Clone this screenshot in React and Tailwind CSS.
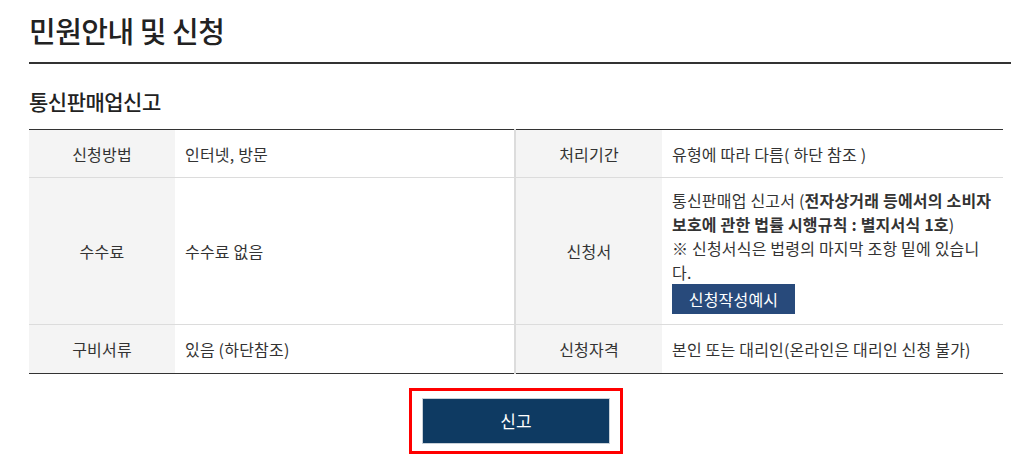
const FONT = { fontFamily: '"Noto Sans CJK KR", "Noto Sans", sans-serif' };

function Th({ children, first }) {
  return (
    <th
      className={
        'bg-[#f4f4f4] text-center align-middle text-[16px] font-normal tracking-[0.2px] text-[#333] ' +
        (first ? '' : 'border-l-2 border-[#dcdcdc]')
      }
    >
      {children}
    </th>
  );
}

function Td({ children }) {
  return (
    <td className="px-[10px] py-[10px] align-middle text-[16px] leading-[24px] tracking-[0.2px] text-[#333]">
      {children}
    </td>
  );
}

export default function App() {
  return (
    <div className="min-h-[465px] bg-white pl-[29px] pt-[10px]" style={FONT}>
      <h1 className="text-[29px] font-medium leading-[40px] tracking-[-0.5px] text-[#222]">민원안내 및 신청</h1>
      <div className="mt-[12px] h-[2px] bg-[#333]" />

      <h2 className="mt-[22px] text-[21px] font-medium leading-[30px] tracking-[-0.5px] text-[#222]">통신판매업신고</h2>

      <table className="mt-[13px] w-[974px] table-fixed border-collapse border-t border-b border-[#333]">
        <colgroup>
          <col className="w-[146px]" />
          <col className="w-[340px]" />
          <col className="w-[147px]" />
          <col className="w-[341px]" />
        </colgroup>
        <tbody>
          <tr className="h-[48px] border-b border-[#dcdcdc]">
            <Th first>신청방법</Th>
            <Td>인터넷, 방문</Td>
            <Th>처리기간</Th>
            <Td>유형에 따라 다름( 하단 참조 )</Td>
          </tr>
          <tr className="h-[147px] border-b border-[#dcdcdc]">
            <Th first>수수료</Th>
            <Td>수수료 없음</Td>
            <Th>신청서</Th>
            <Td>
              <p>
                통신판매업 신고서 (<b className="font-bold">전자상거래 등에서의 소비자 보호에 관한 법률 시행규칙 : 별지서식 1호</b>)
              </p>
              <p>※ 신청서식은 법령의 마지막 조항 밑에 있습니다.</p>
              <button className="h-[30px] w-[123px] bg-[#284a7b] text-[16px] text-white">신청작성예시</button>
            </Td>
          </tr>
          <tr className="h-[49px]">
            <Th first>구비서류</Th>
            <Td>있음 (하단참조)</Td>
            <Th>신청자격</Th>
            <Td>본인 또는 대리인(온라인은 대리인 신청 불가)</Td>
          </tr>
        </tbody>
      </table>

      <div className="mt-[14px] flex w-[974px] justify-center">
        <div className="border-[3px] border-[#ff0000] px-[10px] py-[7px]">
          <button className="h-[46px] w-[188px] border border-[#c8d0d8] bg-[#0e3a62] text-[17px] text-white">신고</button>
        </div>
      </div>
    </div>
  );
}
